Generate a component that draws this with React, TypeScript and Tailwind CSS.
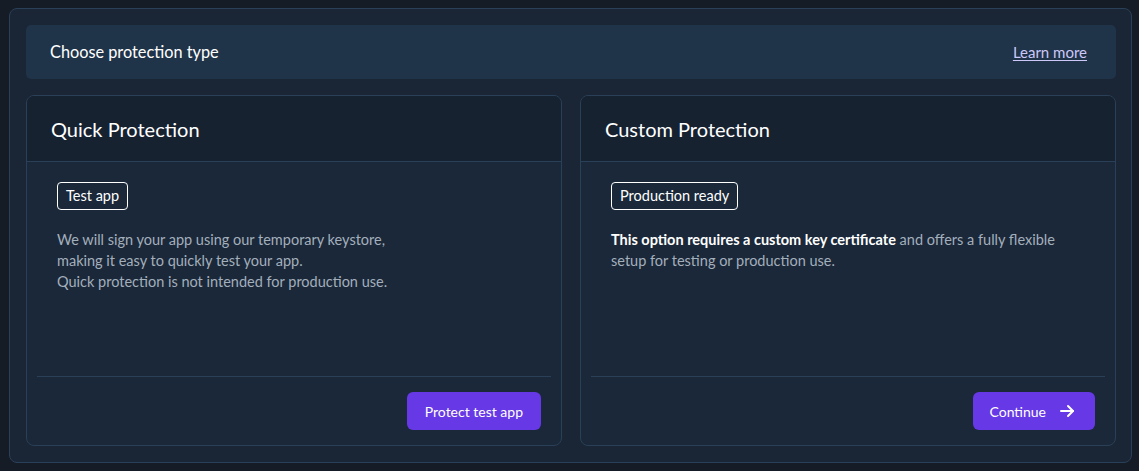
import React from "react";

const font = { fontFamily: "Lato, 'Noto Sans', sans-serif" };

function ArrowRight() {
  return (
    <svg width="16" height="16" viewBox="0 0 16 16" fill="none" stroke="currentColor" strokeWidth="2" strokeLinecap="round" strokeLinejoin="round">
      <path d="M2 8h12" />
      <path d="M9 3l5 5-5 5" />
    </svg>
  );
}

function Card({
  title,
  badge,
  children,
  action,
}: {
  title: string;
  badge: string;
  children: React.ReactNode;
  action: React.ReactNode;
}) {
  return (
    <div className="flex flex-col rounded-[8px] border border-[#2a4058] bg-[#1a2839] overflow-hidden">
      <div className="h-[66px] flex items-center px-[24px] border-b border-[#2a4058] bg-[#172231]">
        <h2 className="text-[20px] text-white leading-none">{title}</h2>
      </div>
      <div className="flex-1 flex flex-col px-[30px] pt-[20px]">
        <div>
          <span className="inline-flex items-center h-[28px] px-[8px] rounded-[4px] border border-white text-white text-[14.5px]">
            {badge}
          </span>
        </div>
        <div className="mt-[19px] text-[14.5px] leading-[21px] text-[#a4afbc]">{children}</div>
      </div>
      <div className="mx-[10px] border-t border-[#2a4058] h-[69px] flex items-center justify-end pr-[10px]">
        {action}
      </div>
    </div>
  );
}

export default function App() {
  return (
    <div className="w-[1139px] h-[471px] bg-[#151c26] pt-[8px] pl-[9px]" style={font}>
      <div className="h-[455px] w-[1123px] rounded-[8px] border border-[#2a4058] bg-[#1a2636] pt-[16px] pb-[16px] pl-[16px] pr-[15px] flex flex-col gap-[16px]">
        <div className="h-[54px] rounded-[5px] bg-[#1f3349] flex items-center justify-between pl-[24px] pr-[29px]">
          <span className="text-[16.3px] text-white">Choose protection type</span>
          <a href="#" className="text-[15px] text-[#cdc8f7] underline underline-offset-2">Learn more</a>
        </div>
        <div className="flex-1 grid grid-cols-2 gap-[18px]">
          <Card
            title="Quick Protection"
            badge="Test app"
            action={
              <button className="h-[38px] px-[18px] rounded-[6px] bg-[#6638e6] text-white text-[14px]">
                Protect test app
              </button>
            }
          >
            <p>We will sign your app using our temporary keystore,</p>
            <p>making it easy to quickly test your app.</p>
            <p>Quick protection is not intended for production use.</p>
          </Card>
          <Card
            title="Custom Protection"
            badge="Production ready"
            action={
              <button className="h-[38px] pl-[17px] pr-[20px] rounded-[6px] bg-[#6638e6] text-white text-[14px] flex items-center gap-[13px]">
                Continue
                <ArrowRight />
              </button>
            }
          >
            <p>
              <strong className="text-white font-bold">This option requires a custom key certificate</strong> and offers a fully flexible
              <br />
              setup for testing or production use.
            </p>
          </Card>
        </div>
      </div>
    </div>
  );
}
